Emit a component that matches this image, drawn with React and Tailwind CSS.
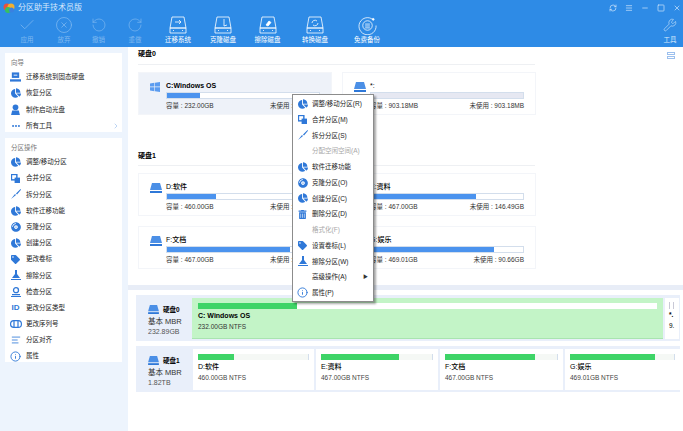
import React from "react";
import { Check, CircleX, RotateCcw, RotateCw, RefreshCw, Menu, Minus, Square, X, Wrench, ChevronRight, Info, MoreHorizontal, AlignLeft } from "lucide-react";
import { FaChartPie, FaTag, FaTrashAlt, FaCompactDisc } from "react-icons/fa";

const FONT = "font-['Liberation_Sans','Noto_Sans_CJK_SC',sans-serif]";

// small drawn icons
const Drive = ({ className = "w-3 h-[10px]" }) => (
  <svg viewBox="0 0 12 10" className={className}>
    <path d="M2 0h8l2 7H0z" fill="#4b8fe6" />
    <rect x="0" y="8" width="12" height="2" fill="#2f78d8" />
  </svg>
);

const WinLogo = () => (
  <svg viewBox="0 0 10 10" className="w-[10px] h-[10px]">
    <path d="M0 1.5 4.4.8v3.8H0zM5 .7 10 0v4.6H5zM0 5.3h4.4v3.9L0 8.5zM5 5.3h5V10l-5-.8z" fill="#5b9cf0" />
  </svg>
);

const Merge = () => (
  <svg viewBox="0 0 10 10" className="w-[9px] h-[9px]">
    <rect x="0.5" y="0.5" width="6" height="6" fill="none" stroke="#2f78d8" strokeWidth="1.6" />
    <rect x="4" y="4" width="6" height="6" fill="#2f78d8" />
  </svg>
);

const Split = () => (
  <svg viewBox="0 0 10 10" className="w-[10px] h-[10px]">
    <path d="M0 10 4 5l1 1zM5 4.5 9.5 0 10 .8 6 5.5z" fill="#2f78d8" />
  </svg>
);

const Broom = () => (
  <svg viewBox="0 0 10 10" className="w-[10px] h-[10px]">
    <path d="M4 0h2v4l3 4H1l3-4zM0 9h10v1H0z" fill="#2f78d8" />
  </svg>
);

const Inspect = () => (
  <svg viewBox="0 0 10 10" className="w-[10px] h-[10px]">
    <circle cx="5" cy="3.2" r="2.5" fill="none" stroke="#2f78d8" strokeWidth="1.3" />
    <path d="M1 7h8v1.2H1zM0 9h10v1H0z" fill="#2f78d8" />
  </svg>
);

const Serial = () => (
  <svg viewBox="0 0 12 8" className="w-[12px] h-[8px]">
    <rect x="0.6" y="0.6" width="10.8" height="6.8" rx="3.2" fill="none" stroke="#2f78d8" strokeWidth="1.2" />
    <path d="M4 1v6M8 1v6" stroke="#2f78d8" strokeWidth="1.2" />
  </svg>
);

const Person = () => (
  <svg viewBox="0 0 10 10" className="w-[11px] h-[11px]">
    <circle cx="5" cy="3" r="2.6" fill="#2f78d8" />
    <path d="M1 10 2 6h6l1 4z" fill="#2f78d8" />
  </svg>
);

const Upload = () => (
  <svg viewBox="0 0 12 10" className="w-[11px] h-[10px]">
    <path d="M2 0h8v6H2z" fill="#2f78d8" />
    <path d="M4 3h4" stroke="#fff" strokeWidth="1" />
    <path d="M0 7.5h12V10H0z" fill="#2f78d8" />
  </svg>
);

const ToolDrive = ({ children }) => (
  <svg viewBox="0 0 20 18" className="w-[20px] h-[18px]" fill="none" stroke="#fff" strokeWidth="0.8">
    <path d="M4 1h12l2 11H2z" />
    <path d="M2 12h16v5H2z" />
    <path d="M5 14.5h1M14 14.5h1" />
    {children}
  </svg>
);

const BLOB = <FaChartPie className="text-[#2f78d8] text-[10px]" />;

const wizard = [
  { icon: <Upload />, label: "迁移系统到固态硬盘" },
  { icon: BLOB, label: "恢复分区" },
  { icon: <Person />, label: "制作启动光盘" },
  { icon: <MoreHorizontal size={10} strokeWidth={3} className="text-[#2f78d8]" />, label: "所有工具", more: true },
];

const operations = [
  { icon: BLOB, label: "调整/移动分区" },
  { icon: <Merge />, label: "合并分区" },
  { icon: <Split />, label: "拆分分区" },
  { icon: BLOB, label: "软件迁移功能" },
  { icon: <FaCompactDisc className="text-[#2f78d8] text-[10px]" />, label: "克隆分区" },
  { icon: BLOB, label: "创建分区" },
  { icon: <FaTag className="text-[#2f78d8] text-[9px]" />, label: "更改卷标" },
  { icon: <Broom />, label: "擦除分区" },
  { icon: <Inspect />, label: "检查分区" },
  { icon: <span className="text-[#2f78d8] text-[8px] font-bold leading-none">ID</span>, label: "更改分区类型" },
  { icon: <Serial />, label: "更改序列号" },
  { icon: <AlignLeft size={10} strokeWidth={2} className="text-[#2f78d8]" />, label: "分区对齐" },
  { icon: <Info size={11} strokeWidth={2} className="text-[#2f78d8]" />, label: "属性" },
];

const menuItems = [
  { icon: BLOB, label: "调整/移动分区(R)" },
  { icon: <Merge />, label: "合并分区(M)" },
  { icon: <Split />, label: "拆分分区(S)" },
  { label: "分配空闲空间(A)", off: true },
  { icon: BLOB, label: "软件迁移功能" },
  { icon: <FaCompactDisc className="text-[#2f78d8] text-[10px]" />, label: "克隆分区(O)" },
  { icon: BLOB, label: "创建分区(C)" },
  { icon: <FaTrashAlt className="text-[#2f78d8] text-[9px]" />, label: "删除分区(D)" },
  { label: "格式化(F)", off: true },
  { icon: <FaTag className="text-[#2f78d8] text-[9px]" />, label: "设置卷标(L)" },
  { icon: <Broom />, label: "擦除分区(W)" },
  { label: "高级操作(A)", sub: true },
  { icon: <Info size={11} strokeWidth={2} className="text-[#2f78d8]" />, label: "属性(P)" },
];

const toolbar = [
  { w: "w-[38px]", label: "应用", off: true, icon: <Check size={18} strokeWidth={1} /> },
  { w: "w-[36px]", label: "放弃", off: true, icon: <CircleX size={18} strokeWidth={1} /> },
  { w: "w-[33px]", label: "撤销", off: true, icon: <RotateCcw size={16} strokeWidth={1} /> },
  { w: "w-[40px]", label: "重做", off: true, icon: <RotateCw size={16} strokeWidth={1} /> },
  { w: "w-[46px]", label: "迁移系统", icon: <ToolDrive><path d="M7 6h6M11 4l2 2-2 2" /></ToolDrive> },
  { w: "w-[44px]", label: "克隆磁盘", icon: <ToolDrive><path d="M11 3v7l3-1" /></ToolDrive> },
  { w: "w-[45px]", label: "擦除磁盘", icon: <ToolDrive><path d="M8 9l3-4 2 1.5-3 3.5z" fill="#fff" /></ToolDrive> },
  { w: "w-[50px]", label: "转换磁盘", icon: <ToolDrive><path d="M7 7a3 3 0 0 1 5-2M13 7a3 3 0 0 1-5 2" /></ToolDrive> },
  {
    w: "w-[54px]",
    label: "免费备份",
    icon: (
      <svg viewBox="0 0 20 20" className="w-[19px] h-[19px]" fill="none" stroke="#fff" strokeWidth="0.8">
        <path d="M16 4a9 9 0 1 0 3 6" />
        <circle cx="16" cy="3.5" r="1" fill="#fff" />
        <circle cx="10" cy="10" r="5" />
        <path d="M7.5 8.5h5M7.5 10.5h5M7.5 12.5h5" />
      </svg>
    ),
  },
];

const Bar = ({ fill, gray }) => (
  <div className={`h-[7px] w-[154px] border border-[#d3deec] ${gray ? "bg-[#e6e8f2]" : "bg-white"}`}>
    {fill ? <div className="h-full bg-[#4b93ee]" style={{ width: fill }} /> : null}
  </div>
);

// free is left out for the cards whose value sits under the context menu
const PartCard = ({ icon, name, fill, gray, total, free, active, bold }) => (
  <div className={`w-[194px] h-[43px] flex pl-[11px] pt-[8px] border border-[#f3f5f9] ${active ? "bg-[#eef2f9]" : "bg-white"}`}>
    <div className="w-[16px] pt-[1px]">{icon}</div>
    <div className="w-[154px]">
      <div className={`h-[10px] leading-[10px] text-[7px] text-black ${bold ? "font-bold" : "font-medium"}`}>{name}</div>
      <div className="mt-[1px]"><Bar fill={fill} gray={gray} /></div>
      <div className="mt-[2px] h-[10px] leading-[10px] flex justify-between text-[6.5px] text-[#333]">
        <span>容量 : {total}</span>
        {free ? <span>未使用 : {free}</span> : <span className="w-[50px]">未使用 :</span>}
      </div>
    </div>
  </div>
);

const MapCell = ({ w, barW, fill, name, sub }) => (
  <div className={`${w} h-[41px] bg-white px-[5px] pt-[5px] shrink-0`}>
    <div className={`${barW} h-[6px] border-r border-[#d3deec] bg-[#f5f8f5]`}>
      <div className="h-full bg-[#3ed467]" style={{ width: fill }} />
    </div>
    <div className="mt-[2px] text-[7px] leading-[10px] font-medium text-black">{name}</div>
    <div className="mt-[1px] text-[6.5px] leading-[10px] text-[#444]">{sub}</div>
  </div>
);

const DiskInfo = ({ name, size, w }) => (
  <div className={`${w} shrink-0 pl-[12px] pt-[6px]`}>
    <div className="flex items-center gap-[4px] h-[9px]">
      <Drive className="w-[11px] h-[9px]" />
      <span className="text-[6.5px] font-bold text-black whitespace-nowrap">{name}</span>
    </div>
    <div className="mt-[3px] text-[7.5px] leading-[10px] text-[#333] whitespace-nowrap">基本 MBR</div>
    <div className="text-[7px] leading-[10px] text-[#555]">{size}</div>
  </div>
);

const SideRow = ({ item }) => (
  <div className="h-[16.2px] flex items-center">
    <div className="w-[21px] flex justify-center shrink-0">{item.icon}</div>
    <span className="text-[6.5px] text-[#222] whitespace-nowrap">{item.label}</span>
    {item.more ? <ChevronRight size={8} className="ml-auto mr-[2px] text-[#9cc0ee]" /> : null}
  </div>
);

export default function App() {
  return (
    <div className={`relative w-[683px] h-[431px] overflow-hidden bg-white flex flex-col ${FONT}`}>
      {/* title bar and toolbar */}
      <div className="h-[47px] shrink-0 bg-[#2e8be6] text-white">
        <div className="h-[15px] flex items-center pl-[3px]">
          <svg viewBox="0 0 12 10" className="w-[12px] h-[10px]">
            <circle cx="4" cy="4" r="3.5" fill="#e8503c" />
            <circle cx="8" cy="4" r="3.5" fill="#f0b030" />
            <circle cx="5" cy="7" r="3" fill="#38c060" />
            <circle cx="8.5" cy="7" r="2.5" fill="#3a80e0" />
          </svg>
          <span className="ml-[3px] text-[8px] text-[#d8eafc]">分区助手技术员版</span>
          <div className="ml-auto flex items-center gap-[8px] pr-[2px] text-[#d8eafc]">
            <RefreshCw size={8} />
            <Menu size={8} />
            <Minus size={8} />
            <Square size={8} />
            <X size={8} />
          </div>
        </div>
        <div className="flex pl-[8px] h-[32px]">
          {toolbar.map((t) => (
            <div key={t.label} className={`${t.w} flex flex-col items-center ${t.off ? "text-[#7fb8f0]" : "text-white"}`}>
              <div className="h-[20px] flex items-center justify-center">{t.icon}</div>
              <span className="text-[6.5px] leading-[10px] whitespace-nowrap">{t.label}</span>
            </div>
          ))}
          <div className="ml-auto mr-[4px] w-[18px] flex flex-col items-center text-[#d8eafc]">
            <div className="h-[20px] flex items-center justify-center"><Wrench size={14} strokeWidth={1} /></div>
            <span className="text-[6.5px] leading-[10px]">工具</span>
          </div>
        </div>
      </div>

      <div className="flex flex-1 min-h-0">
        {/* left sidebar */}
        <div className="w-[128px] shrink-0 bg-[#edf4fd] pl-[5px] pr-[6px] pt-[6px]">
          <div className="bg-white h-[79px] pt-[3px]">
            <div className="h-[13px] leading-[13px] pl-[6px] text-[6.5px] text-[#777]">向导</div>
            {wizard.map((w) => <SideRow key={w.label} item={w} />)}
          </div>
          <div className="bg-white mt-[6px] h-[224px] pt-[3px]">
            <div className="h-[13px] leading-[13px] pl-[6px] text-[6.5px] text-[#777]">分区操作</div>
            {operations.map((o) => <SideRow key={o.label} item={o} />)}
          </div>
        </div>

        {/* main area */}
        <div className="flex-1 min-w-0 flex flex-col">
          <div className="h-[238px] shrink-0 pl-[10px]">
            <div className="flex items-center h-[14px] pt-[1px]">
              <span className="text-[7px] font-bold text-black">硬盘0</span>
              <div className="ml-auto mr-[8px] flex flex-col gap-[1px] mt-[2px]">
                <div className="w-[8px] h-[3px] border border-[#9cc0ee]" />
                <div className="w-[8px] h-[3px] border border-[#9cc0ee]" />
              </div>
            </div>
            <div className="w-[397px] mt-[3px] border-b border-[#eef0f3]" />
            <div className="mt-[7px] flex gap-[10px]">
              <PartCard active bold icon={<WinLogo />} name="C:Windows OS" fill="33px" total="232.00GB" />
              <PartCard icon={<Drive />} name="*:" gray total="903.18MB" free="903.18MB" />
            </div>
            <div className="mt-[33px] h-[14px] leading-[14px] pt-[1px] text-[7px] font-bold text-black">硬盘1</div>
            <div className="w-[397px] mt-[3px] border-b border-[#eef0f3]" />
            <div className="mt-[7px] grid grid-cols-[194px_194px] gap-x-[10px] gap-y-[10px]">
              <PartCard icon={<Drive />} name="D:软件" fill="49px" total="460.00GB" />
              <PartCard icon={<Drive />} name="E:资料" fill="105px" total="467.00GB" free="146.49GB" />
              <PartCard icon={<Drive />} name="F:文档" fill="123px" total="467.00GB" />
              <PartCard icon={<Drive />} name="G:娱乐" fill="123px" total="469.01GB" free="90.66GB" />
            </div>
          </div>

          {/* disk map */}
          <div className="h-[5px] shrink-0 bg-[#e8edf7]" />
          <div className="pl-[8px] pr-[3px] pt-[5px]">
            <div className="h-[46px] bg-[#e9effa] flex items-center">
              <DiskInfo name="硬盘0" size="232.89GB" w="w-[56px]" />
              <div className="w-[471px] h-[41px] bg-[#c3f4c7] border-b border-[#a9e4b0] px-[6px] pt-[5px] shrink-0">
                <div className="h-[6px] bg-white">
                  <div className="h-full w-[99px] bg-[#3ed467]" />
                </div>
                <div className="mt-[2px] text-[7px] leading-[10px] font-bold text-black">C: Windows OS</div>
                <div className="mt-[1px] text-[6.5px] leading-[10px] text-[#333]">232.00GB NTFS</div>
              </div>
              <div className="ml-[2px] w-[14px] h-[41px] bg-white pl-[4px] pt-[4px] shrink-0">
                <div className="w-[5px] h-[7px] border-x border-[#c9c9d6]" />
                <div className="text-[6.5px] leading-[11px] font-bold">*.</div>
                <div className="text-[6.5px] leading-[11px]">9.</div>
              </div>
            </div>
            <div className="mt-[5px] h-[46px] bg-[#e9effa] flex items-center gap-[2px]">
              <DiskInfo name="硬盘1" size="1.82TB" w="w-[55px]" />
              <MapCell w="w-[121px]" barW="w-[111px]" fill="36px" name="D:软件" sub="460.00GB NTFS" />
              <MapCell w="w-[122px]" barW="w-[112px]" fill="78px" name="E:资料" sub="467.00GB NTFS" />
              <MapCell w="w-[123px]" barW="w-[113px]" fill="90px" name="F:文档" sub="467.00GB NTFS" />
              <MapCell w="w-[115px]" barW="w-[105px]" fill="85px" name="G:娱乐" sub="469.01GB NTFS" />
            </div>
          </div>
        </div>
      </div>

      {/* context menu */}
      <div className="absolute left-[292px] top-[94px] w-[82px] h-[208px] pt-[1px] bg-white border border-[#8c8c8c] shadow-[2px_2px_2px_rgba(0,0,0,0.35)]">
        {menuItems.map((m) => (
          <div key={m.label} className="h-[15.75px] flex items-center">
            <div className="w-[19px] flex justify-center shrink-0">{m.icon}</div>
            <span className={`text-[6.5px] whitespace-nowrap ${m.off ? "text-[#a8a8a8]" : "text-[#222]"}`}>{m.label}</span>
            {m.sub ? <span className="ml-auto mr-[5px] text-[5px] text-[#333]">▶</span> : null}
          </div>
        ))}
      </div>
    </div>
  );
}
